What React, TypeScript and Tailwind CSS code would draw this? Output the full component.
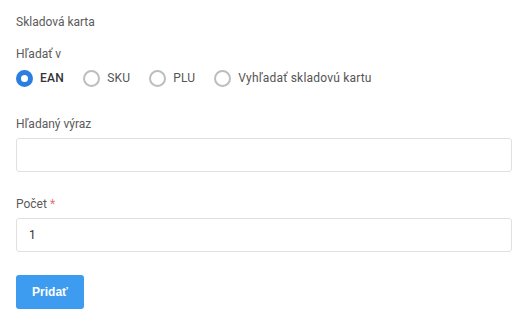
import { useState } from "react";

const options = ["EAN", "SKU", "PLU", "Vyhľadať skladovú kartu"];

export default function App() {
  const [selected, setSelected] = useState("EAN");
  const [query, setQuery] = useState("");
  const [count, setCount] = useState("1");

  return (
    <div className="min-h-[333px] w-[528px] bg-white px-4 pt-[15px] font-['Roboto',sans-serif] text-[12px] text-[#5a5a5a]">
      <div className="leading-[14px]">Skladová karta</div>

      <div className="mt-[18px] leading-[14px]">Hľadať v</div>
      <div className="mt-[8px] flex items-center gap-[19px]">
        {options.map((o) => {
          const active = o === selected;
          return (
            <label
              key={o}
              className="flex cursor-pointer items-center gap-[7px]"
              onClick={() => setSelected(o)}
            >
              <span
                className={
                  active
                    ? "h-[17px] w-[17px] rounded-full border-[5px] border-[#2b7ee0] bg-white"
                    : "h-[17px] w-[17px] rounded-full border-2 border-[#bdbdbd] bg-white"
                }
              />
              <span className={active ? "font-medium tracking-[0.3px] text-[#333]" : "tracking-[0.2px] text-[#555]"}>{o}</span>
            </label>
          );
        })}
      </div>

      <div className="mt-[30px] leading-[14px]">Hľadaný výraz</div>
      <input
        value={query}
        onChange={(e) => setQuery(e.target.value)}
        className="mt-[7px] block h-[34px] w-[496px] rounded-[3px] border border-[#e0e0e0] px-3 text-[12px] text-[#333] outline-none"
      />

      <div className="mt-[25px] leading-[14px]">
        Počet <span className="text-[#e57373]">*</span>
      </div>
      <input
        value={count}
        onChange={(e) => setCount(e.target.value)}
        className="mt-[7px] block h-[34px] w-[496px] rounded-[3px] border border-[#e0e0e0] px-3 text-[12px] text-[#333] outline-none"
      />

      <button className="mt-[23px] h-[34px] w-[68px] rounded-[3px] bg-[#3d9bf0] font-['Liberation_Sans',sans-serif] text-[12px] font-bold text-white">
        Pridať
      </button>
    </div>
  );
}
